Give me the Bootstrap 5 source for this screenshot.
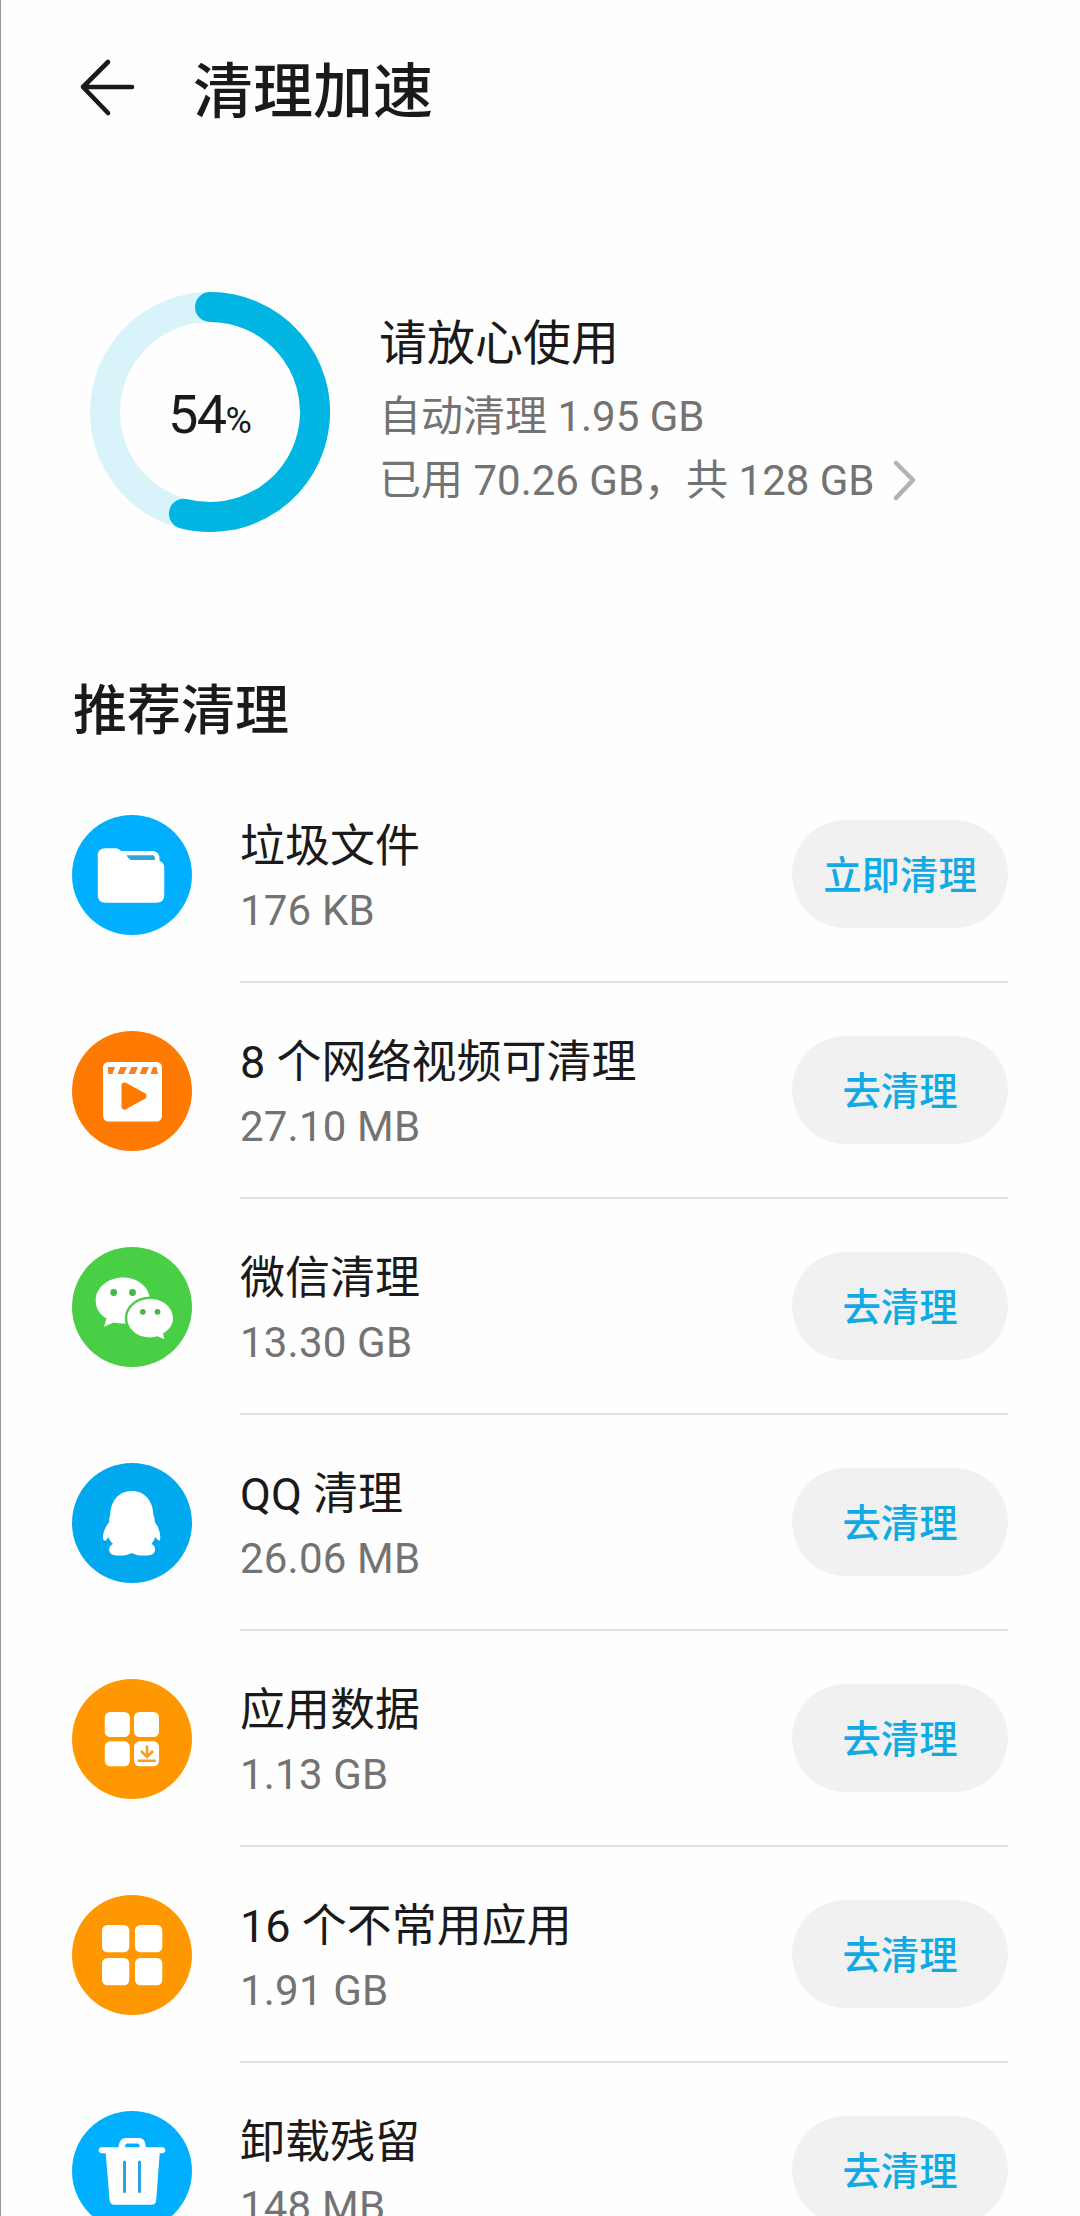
<!DOCTYPE html>
<html lang="zh-CN">
<head>
<meta charset="utf-8">
<meta name="viewport" content="width=device-width, initial-scale=1">
<title>清理加速</title>
<link href="https://cdn.jsdelivr.net/npm/bootstrap@5.3.0/dist/css/bootstrap.min.css" rel="stylesheet">
<style>
  body { font-family: Roboto, "Noto Sans CJK SC", sans-serif; color: #1a1a1a; background: #fefefe; }
  .screen { height: 2216px; border-left: 1px solid #999; padding: 0 72px 0 71px; }
  .topbar { height: 174px; padding-left: 6px; }
  .topbar h1 { font-size: 60px; font-weight: 500; line-height: 80px; margin-left: 51px; padding-top: 11px; }
  .summary { height: 236px; margin-top: 120px; padding-left: 17px; }
  .ring { width: 242px; height: 242px; }
  .ring-label { font-size: 54px; letter-spacing: -1.6px; line-height: 60px; padding-top: 11px; }
  .ring-label span { font-size: 36px; letter-spacing: 0; }
  .info { margin-left: 48px; }
  .info-title { font-size: 48px; line-height: 72px; margin-top: -4px; margin-bottom: 5px; }
  .info-line { font-size: 42px; line-height: 64px; color: #737373; }
  .section-title { font-size: 54px; font-weight: 500; line-height: 80px; margin: 142px 0 0 1px; }
  .clean-list { margin-top: 15px; }
  .clean-row { height: 216px; }
  .row-icon { width: 120px; height: 120px; margin-right: 48px; }
  .row-body { border-bottom: 2px solid #e1e1e1; }
  .row-text { padding-top: 10px; }
  .clean-row:last-child .row-body { border-color: transparent; }
  .row-name { font-size: 45px; line-height: 64px; }
  .row-size { font-size: 42px; line-height: 64px; color: #737373; letter-spacing: .2px; }
  .btn-clean { width: 216px; height: 108px; background: #f1f1f1; color: #12aae4; font-size: 38.4px; font-weight: 500; padding: 4px 0 0; }
</style>
</head>
<body>
<main class="screen overflow-hidden">
  <header class="topbar d-flex align-items-center">
    <svg width="64" height="64" viewBox="0 0 64 64" fill="none" stroke="#1a1a1a" stroke-width="4.6" stroke-linecap="round" stroke-linejoin="round" aria-label="返回"><path d="M54 32H5M30 7L5 32L30 58"/></svg>
    <h1 class="mb-0">清理加速</h1>
  </header>

  <section class="summary d-flex align-items-center">
    <div class="ring position-relative flex-shrink-0">
      <svg class="d-block" width="242" height="242" viewBox="0 0 242 242" fill="none" stroke-width="30">
        <circle cx="121" cy="121" r="105" stroke="#d9f3fa"/>
        <path d="M121 16A105 105 0 1 1 94.9 222.7" stroke="#00b5e2" stroke-linecap="round"/>
      </svg>
      <div class="ring-label position-absolute top-0 start-0 w-100 h-100 d-flex align-items-center justify-content-center"><div>54<span>%</span></div></div>
    </div>
    <div class="info">
      <div class="info-title">请放心使用</div>
      <div class="info-line">自动清理 1.95 GB</div>
      <div class="info-line d-flex align-items-center">已用 70.26 GB，共 128 GB
        <svg class="ms-3" width="28" height="44" viewBox="0 0 28 44" fill="none" stroke="#b2b2b2" stroke-width="4.5" stroke-linecap="round" stroke-linejoin="round"><path d="M5 4L22 21L5 39"/></svg>
      </div>
    </div>
  </section>

  <h2 class="section-title">推荐清理</h2>

  <div class="clean-list">
    <div class="clean-row d-flex align-items-center">
      <svg class="row-icon flex-shrink-0" viewBox="0 0 120 120"><circle cx="60" cy="60" r="60" fill="#00b0ff"/><path fill="#fff" d="M33 33.3H44Q47 33.3 49 36H80Q87.3 36 87.6 44V46Q92.3 47.5 92.3 53V80Q92.3 87.7 84.5 87.7H33.5Q25.7 87.7 25.7 80V41Q25.7 33.3 33 33.3Z"/><path fill="#2ea4de" d="M54.5 40.3H81Q83 40.3 83 45H60Q57 45 54.5 40.3Z"/></svg>
      <div class="row-body d-flex align-items-center justify-content-between flex-grow-1 h-100">
        <div class="row-text"><div class="row-name">垃圾文件</div><div class="row-size">176 KB</div></div>
        <button class="btn btn-clean rounded-pill border-0" type="button">立即清理</button>
      </div>
    </div>
    <div class="clean-row d-flex align-items-center">
      <svg class="row-icon flex-shrink-0" viewBox="0 0 120 120"><circle cx="60" cy="60" r="60" fill="#ff7a00"/><rect x="31" y="31" width="59" height="59.5" rx="5.5" fill="#fff"/><path fill="#f58220" d="M36 36H43L40.5 43H36.5Q35 39 36 36ZM48.5 36H55L52 43H45.5ZM59.5 36H66L63 43H56.5ZM70.5 36H77L74 43H67.5ZM81 36H84.5L86 43H78.5Z"/><path fill="#ff7a00" stroke="#ff7a00" stroke-width="6" stroke-linejoin="round" d="M52.5 54.5L71.5 65L52.5 75.5Z"/></svg>
      <div class="row-body d-flex align-items-center justify-content-between flex-grow-1 h-100">
        <div class="row-text"><div class="row-name">8 个网络视频可清理</div><div class="row-size">27.10 MB</div></div>
        <button class="btn btn-clean rounded-pill border-0" type="button">去清理</button>
      </div>
    </div>
    <div class="clean-row d-flex align-items-center">
      <svg class="row-icon flex-shrink-0" viewBox="0 0 120 120"><circle cx="60" cy="60" r="60" fill="#48cf46"/><path fill="#fff" d="M51 30.5C66 30.5 78 40.5 78 53.5S66 76.5 51 76.5Q46 76.5 41.5 75.5L32 79.7L34.5 71.5C27.5 67.5 23.7 61 23.7 53.5C23.7 40.5 36 30.5 51 30.5Z"/><path fill="#fff" stroke="#48cf46" stroke-width="5" paint-order="stroke" d="M78.2 52C91 52 101 60.5 101 71.2C101 77.5 97.5 82.5 91 86.5L92.3 92.3L85.5 89.3Q82 90.4 78.2 90.4C65.5 90.4 55.3 82 55.3 71.2C55.3 60.5 65.5 52 78.2 52Z"/><g fill="#48b548"><circle cx="41.7" cy="45.5" r="3.4"/><circle cx="60.5" cy="45.5" r="3.4"/><circle cx="70.8" cy="64.8" r="2.9"/><circle cx="85.5" cy="64.8" r="2.9"/></g></svg>
      <div class="row-body d-flex align-items-center justify-content-between flex-grow-1 h-100">
        <div class="row-text"><div class="row-name">微信清理</div><div class="row-size">13.30 GB</div></div>
        <button class="btn btn-clean rounded-pill border-0" type="button">去清理</button>
      </div>
    </div>
    <div class="clean-row d-flex align-items-center">
      <svg class="row-icon flex-shrink-0" viewBox="0 0 120 120"><circle cx="60" cy="60" r="60" fill="#00a9ee"/><path fill="#fff" d="M59.8 28C73 28 81 38.5 81.3 51C81.7 54 83 55.500 82.8 59C86 63.5 88.5 69 88.3 75Q88 79 86 77Q84.5 76 83.3 74C82.5 77 81 78.5 79.5 81C85 83.5 84 91 78.5 92C71 93.2 64 92.5 59.8 90C55.5 92.5 48 93.2 41.5 92C36 91 35.5 83.5 41 81C38.5 78.5 37.3 77 36.5 74Q34.5 77.5 33 77.8Q31 78 31 74C31 69 33.5 63.5 37.2 59C37 55.5 37.8 54 38.3 51C38.8 38.5 46.5 28 59.8 28Z"/></svg>
      <div class="row-body d-flex align-items-center justify-content-between flex-grow-1 h-100">
        <div class="row-text"><div class="row-name">QQ 清理</div><div class="row-size">26.06 MB</div></div>
        <button class="btn btn-clean rounded-pill border-0" type="button">去清理</button>
      </div>
    </div>
    <div class="clean-row d-flex align-items-center">
      <svg class="row-icon flex-shrink-0" viewBox="0 0 120 120"><circle cx="60" cy="60" r="60" fill="#ff9800"/><g fill="#fff"><rect x="32.8" y="33" width="25" height="25" rx="5.5"/><rect x="62" y="33" width="25" height="25" rx="5.5"/><rect x="32.8" y="62.3" width="25" height="25" rx="5.5"/><rect x="62" y="62.3" width="25" height="25" rx="5.5"/></g><path fill="none" stroke="#f59d20" stroke-width="2.6" d="M75 66.5V77.5M69 72L75 78L81 72M65.7 81.7H83.7"/></svg>
      <div class="row-body d-flex align-items-center justify-content-between flex-grow-1 h-100">
        <div class="row-text"><div class="row-name">应用数据</div><div class="row-size">1.13 GB</div></div>
        <button class="btn btn-clean rounded-pill border-0" type="button">去清理</button>
      </div>
    </div>
    <div class="clean-row d-flex align-items-center">
      <svg class="row-icon flex-shrink-0" viewBox="0 0 120 120"><circle cx="60" cy="60" r="60" fill="#ff9800"/><g fill="#fff"><rect x="30" y="30" width="27.3" height="27.3" rx="5.5"/><rect x="63" y="30" width="27.3" height="27.3" rx="5.5"/><rect x="30" y="63" width="27.3" height="27.3" rx="5.5"/><rect x="63" y="63" width="27.3" height="27.3" rx="5.5"/></g></svg>
      <div class="row-body d-flex align-items-center justify-content-between flex-grow-1 h-100">
        <div class="row-text"><div class="row-name">16 个不常用应用</div><div class="row-size">1.91 GB</div></div>
        <button class="btn btn-clean rounded-pill border-0" type="button">去清理</button>
      </div>
    </div>
    <div class="clean-row d-flex align-items-center">
      <svg class="row-icon flex-shrink-0" viewBox="0 0 120 120"><circle cx="60" cy="60" r="60" fill="#00b0ff"/><path fill="#fff" fill-rule="evenodd" d="M29.5 36.3H46.5C47 30 50 27 54 27H67C71 27 73.5 30 74 36.3H90.5C94.3 36.3 94.3 42.3 90.5 42.3H87.7L84.2 89Q84 93.7 79.5 93.7H42.3Q38 93.7 37.6 89L33.7 42.3H29.5C25.7 42.3 25.7 36.3 29.5 36.3ZM53 36.3H67.7Q67.7 32.5 65.5 32.5H55.2Q53 32.5 53 36.3Z"/><path stroke="#29a5df" stroke-width="3" stroke-linecap="round" d="M52.5 51V80.5M67.5 51V80.5"/></svg>
      <div class="row-body d-flex align-items-center justify-content-between flex-grow-1 h-100">
        <div class="row-text"><div class="row-name">卸载残留</div><div class="row-size">148 MB</div></div>
        <button class="btn btn-clean rounded-pill border-0" type="button">去清理</button>
      </div>
    </div>
  </div>
</main>
<script src="https://cdn.jsdelivr.net/npm/bootstrap@5.3.0/dist/js/bootstrap.bundle.min.js"></script>
</body>
</html>
